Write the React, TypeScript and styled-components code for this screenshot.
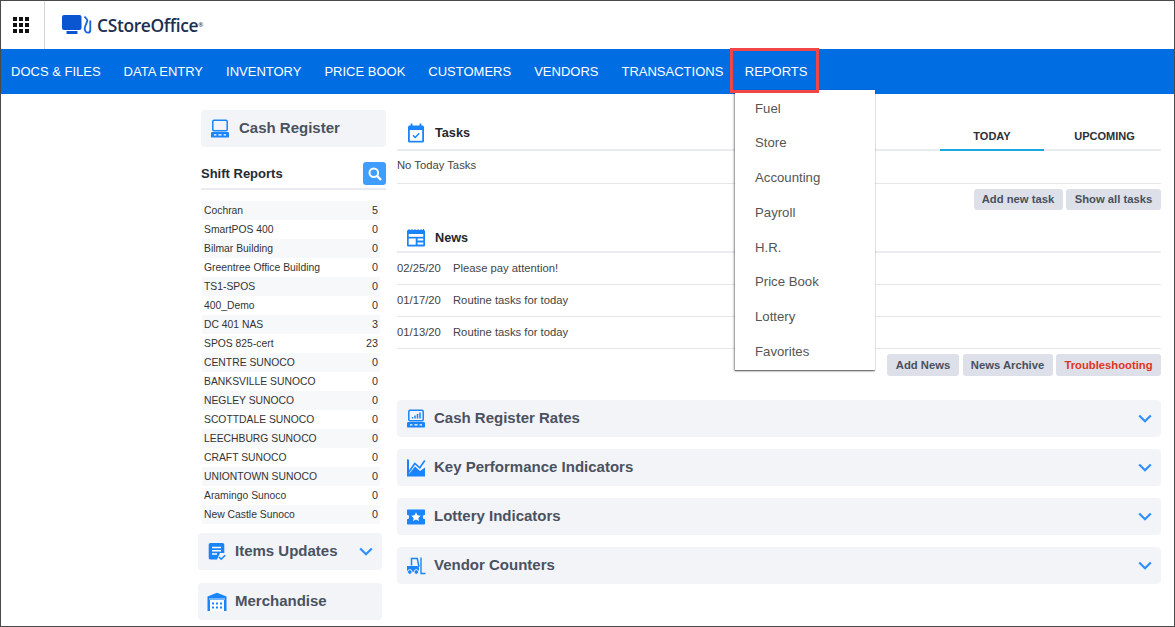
import React from "react";
import styled, { createGlobalStyle } from "styled-components";

const Global = createGlobalStyle`
  html, body { margin: 0; padding: 0; background: #fff; }
  * { box-sizing: border-box; }
`;

const sans = `"Liberation Sans", Arial, sans-serif`;
const ICON = "#1a84fb";

const Frame = styled.div`
  position: relative;
  width: 1175px;
  height: 627px;
  overflow: hidden;
  border: 1px solid #4a4a4a;
  background: #fff;
  font-family: ${sans};
`;

const TopBar = styled.header`
  display: flex;
  align-items: center;
  height: 48px;
  background: #fff;
`;

const GridButton = styled.div`
  display: grid;
  grid-template-columns: repeat(3, 4px);
  grid-auto-rows: 4px;
  gap: 2px;
  align-content: center;
  justify-content: start;
  width: 44px;
  height: 48px;
  padding-left: 12px;
  border-right: 1px solid #d6d6d6;
`;

const GridDot = styled.span`
  background: #111;
`;

const LogoWrap = styled.div`
  display: flex;
  align-items: center;
  margin-left: 17px;
`;

const LogoText = styled.span`
  margin-left: 5px;
  margin-top: -1px;
  font-family: "Open Sans", sans-serif;
  font-size: 17.4px;
  font-weight: 600;
  letter-spacing: -0.35px;
  color: #1c3050;
  sup {
    font-size: 6px;
    vertical-align: 5px;
    line-height: 0;
    letter-spacing: 0;
  }
`;

const Nav = styled.nav`
  display: flex;
  align-items: center;
  height: 45px;
  padding-left: 10px;
  padding-bottom: 1px;
  background: #006de3;
`;

const NavItem = styled.a`
  margin-right: 23px;
  font-size: 13px;
  color: #fff;
  white-space: nowrap;
  &:nth-last-child(2) {
    margin-right: 21.5px;
  }
`;

const Highlight = styled.div`
  position: absolute;
  left: 729px;
  top: 47px;
  width: 89px;
  height: 45px;
  border: 3px solid #f24545;
  z-index: 3;
`;

const Menu = styled.ul`
  position: absolute;
  left: 734px;
  top: 89px;
  width: 140px;
  height: 280px;
  margin: 0;
  padding: 0.8px 0 0;
  list-style: none;
  background: #fff;
  box-shadow: -1px 1px 2px rgba(0, 0, 0, 0.4), 0 1px 1px rgba(0, 0, 0, 0.35), 0 0 1px rgba(0, 0, 0, 0.2);
  z-index: 2;
`;

const MenuItem = styled.li`
  display: flex;
  align-items: center;
  height: 34.72px;
  padding-left: 20px;
  font-size: 13.2px;
  color: #555;
`;

const Main = styled.main`
  display: flex;
  align-items: flex-start;
`;

const Sidebar = styled.aside`
  width: 185px;
  margin-left: 200px;
  padding-top: 16px;
`;

const PanelHead = styled.div<{ $shift?: boolean }>`
  display: flex;
  align-items: center;
  width: ${(p) => (p.$shift ? "184px" : "185px")};
  height: 37px;
  margin-left: ${(p) => (p.$shift ? "-3px" : "0")};
  padding-left: 9px;
  padding-right: 9px;
  border-radius: 4px;
  background: #f3f4f8;
`;

const PanelIcon = styled.span<{ $gap?: number }>`
  display: flex;
  width: 20px;
  height: 20px;
  flex: none;
  margin-right: ${(p) => p.$gap ?? 8}px;
`;

const PanelTitle = styled.span`
  flex: 1;
  padding-bottom: 1.5px;
  font-size: 15px;
  font-weight: 700;
  color: #4a5260;
  white-space: nowrap;
`;

const ShiftHead = styled.div`
  display: flex;
  align-items: center;
  justify-content: space-between;
  height: 43px;
  padding-top: 12px;
  margin-bottom: 11px;
  border-bottom: 2px solid #e9ebf0;
`;

const ShiftTitle = styled.span`
  font-size: 13px;
  font-weight: 700;
  color: #262b33;
`;

const SearchButton = styled.span`
  display: flex;
  align-items: center;
  justify-content: center;
  width: 23px;
  height: 23px;
  border-radius: 3px;
  background: #3f9dff;
`;

const RowList = styled.div`
  width: 178px;
  margin-left: 1px;
  margin-bottom: 9px;
`;

const Row = styled.div`
  display: flex;
  align-items: baseline;
  justify-content: space-between;
  height: 19px;
  padding: 0 2px;
  font-size: 10.35px;
  line-height: 19px;
  color: #333;
  &:nth-child(odd) {
    background: #f7f8fa;
  }
`;

const RowValue = styled.span`
  font-size: 10.8px;
`;

const Spacer = styled.div`
  height: 13px;
`;

const Content = styled.section`
  width: 764px;
  margin-left: 11px;
  padding-top: 22px;
`;

const SectionHead = styled.div<{ $top?: number }>`
  position: relative;
  display: flex;
  align-items: center;
  height: ${(p) => (p.$top ? "29px" : "35px")};
  margin-top: ${(p) => p.$top ?? 0}px;
  padding-top: ${(p) => (p.$top ? "0" : "1px")};
  padding-left: 9px;
  border-bottom: 2px solid #e9ebf0;
`;

const SectionIcon = styled.span`
  display: flex;
  flex: none;
  width: 20px;
  height: 20px;
  margin-right: 9px;
`;

const SectionTitle = styled.span`
  font-size: 12.7px;
  font-weight: 700;
  color: #23272e;
`;

const Tabs = styled.div`
  position: absolute;
  right: 0;
  bottom: -2px;
  display: flex;
  height: 33px;
`;

const Tab = styled.div<{ $active?: boolean; $w: number }>`
  display: flex;
  align-items: center;
  justify-content: center;
  width: ${(p) => p.$w}px;
  padding-top: 4px;
  font-size: 11px;
  font-weight: 700;
  color: #2b2f36;
  border-bottom: 2px solid ${(p) => (p.$active ? "#1ba7e0" : "#e9ebf0")};
  &:last-child {
    padding-left: 4px;
  }
`;

const BodyRow = styled.div`
  display: flex;
  align-items: center;
  height: 32px;
  padding-bottom: 1.5px;
  font-size: 11.25px;
  color: #444;
  border-bottom: 1px solid #e4e6ea;
`;

const TaskBody = styled(BodyRow)`
  height: 33px;
  padding-bottom: 4.5px;
`;

const NewsDate = styled.span`
  width: 56px;
`;

const Actions = styled.div<{ $top?: number }>`
  display: flex;
  justify-content: flex-end;
  gap: 3.5px;
  margin-top: ${(p) => p.$top ?? 5}px;
`;

const ActionButton = styled.span<{ $danger?: boolean; $w: number }>`
  display: flex;
  align-items: center;
  justify-content: center;
  width: ${(p) => p.$w}px;
  height: 21.5px;
  border-radius: 3px;
  background: #dde0e8;
  font-size: 11.25px;
  font-weight: 700;
  color: ${(p) => (p.$danger ? "#e1341e" : "#48505e")};
  white-space: nowrap;
`;

const Accordions = styled.div`
  display: flex;
  flex-direction: column;
  gap: 12px;
  margin-top: 24.5px;
`;

const Accordion = styled.div`
  display: flex;
  align-items: center;
  height: 37px;
  padding: 0 9px;
  border-radius: 4px;
  background: #f3f4f8;
`;

const Chevron = () => (
  <svg width="14" height="9" viewBox="0 0 14 9" fill="none" stroke="#2f8fff" strokeWidth="2.2">
    <path d="M1.2 1.5 7 7.2l5.800-5.700" />
  </svg>
);

const RegisterIcon = () => (
  <svg width="20" height="20" viewBox="0 0 20 20" fill="none">
    <rect x="2.800" y="1.200" width="14.400" height="10.600" rx="1.200" stroke={ICON} strokeWidth="1.500" />
    <rect x="1" y="13" width="18" height="5.600" rx="1.200" fill={ICON} />
    <path d="M4 15.800h2.400M8.400 15.800h3.200M13.600 15.800H16" stroke="#fff" strokeWidth="1.300" />
  </svg>
);

const RatesIcon = () => (
  <svg width="20" height="20" viewBox="0 0 20 20" fill="none">
    <rect x="2.800" y="1.200" width="14.400" height="10.600" rx="1.200" stroke={ICON} strokeWidth="1.500" />
    <path d="M6.500 9.500V8M9 9.500V6.500M11.500 9.500V5M14 9.500V3.500" stroke={ICON} strokeWidth="1.500" />
    <rect x="1" y="13" width="18" height="5.600" rx="1.200" fill={ICON} />
    <path d="M4 15.800h2.400M8.400 15.800h3.200M13.600 15.800H16" stroke="#fff" strokeWidth="1.300" />
  </svg>
);

const TrendIcon = () => (
  <svg width="20" height="20" viewBox="0 0 20 20" fill="none">
    <path d="M1 1.500V18.500h18V9.500L14 13 9 8.500 3 16V2z" fill={ICON} />
    <path d="M1.800 1.500v16.500" stroke={ICON} strokeWidth="1.600" />
    <path d="M2.500 14.500 8.800 5.500l5 4.300L18.800 2.500" stroke={ICON} strokeWidth="1.600" />
  </svg>
);

const TicketIcon = () => (
  <svg width="20" height="20" viewBox="0 0 20 20">
    <path
      d="M2 2.500h16c.6 0 1 .4 1 1V7.800a2.200 2.200 0 0 0 0 4.400v4.300c0 .6-.4 1-1 1H2c-.6 0-1-.4-1-1v-4.300a2.200 2.200 0 0 0 0-4.400V3.500c0-.6.4-1 1-1z"
      fill={ICON}
    />
    <path d="m10 5.300 1.400 3 3.300.4-2.400 2.200.6 3.200-2.900-1.600-2.900 1.600.6-3.200-2.400-2.200 3.300-.4z" fill="#fff" />
  </svg>
);

const ForkliftIcon = () => (
  <svg width="20" height="20" viewBox="0 0 20 20" fill="none">
    <path d="M5.500 9.500V2.500h5.800l1.700 8.500" stroke={ICON} strokeWidth="1.500" />
    <path d="M1 10h10.500l1.500 1.500V16H1z" fill={ICON} />
    <circle cx="3.800" cy="16" r="2.300" fill={ICON} stroke="#f3f4f8" strokeWidth="1" />
    <circle cx="10.300" cy="16" r="2.300" fill={ICON} stroke="#f3f4f8" strokeWidth="1" />
    <path d="M15 1.500V17.500h4.500" stroke={ICON} strokeWidth="1.400" />
  </svg>
);

const CalendarIcon = () => (
  <svg width="20" height="20" viewBox="0 0 20 20" fill="none">
    <rect x="2" y="2.500" width="16" height="17" rx="1.500" fill={ICON} />
    <path d="M5.500 0.500v3M14.500 0.500v3" stroke={ICON} strokeWidth="1.800" />
    <rect x="3.800" y="7" width="12.400" height="10.800" fill="#fff" />
    <path d="m7 12.300 2.200 2.200 4-4.200" stroke={ICON} strokeWidth="1.500" />
  </svg>
);

const NewsIcon = () => (
  <svg width="20" height="20" viewBox="0 0 20 20">
    <rect x="1" y="2" width="18" height="16.500" rx="1.200" fill={ICON} />
    <path d="M2.500 1h1v2h-1zM5.500 1h1v2h-1zM8.500 1h1v2h-1zM11.500 1h1v2h-1zM14.500 1h1v2h-1zM17 1h1v2h-1z" fill={ICON} />
    <rect x="2.700" y="6" width="14.600" height="2.800" fill="#fff" />
    <rect x="2.700" y="10.500" width="7" height="6.200" fill="#fff" />
    <rect x="11.500" y="10.500" width="5.800" height="2" fill="#fff" />
    <rect x="11.500" y="14.500" width="5.800" height="2" fill="#fff" />
  </svg>
);

const UpdatesIcon = () => (
  <svg width="20" height="20" viewBox="0 0 20 20" fill="none">
    <path d="M3.500 1h12c1 0 1.800.8 1.800 1.800V11h-4.300l-3 6.500H3.500c-1 0-1.800-.8-1.800-1.800V2.800c0-1 .8-1.800 1.800-1.800z" fill={ICON} />
    <path d="M5 5.500h9M5 8.700h9M5 11.900h5" stroke="#fff" strokeWidth="1.500" />
    <path d="m12 15 2.200 2.200 4-4" stroke={ICON} strokeWidth="1.600" />
  </svg>
);

const WarehouseIcon = () => (
  <svg width="20" height="20" viewBox="0 0 20 20" fill="none">
    <path d="M10 .8 19.500 4.500V19H.5V4.500z" fill={ICON} />
    <rect x="3" y="8" width="14" height="11" fill="#fff" />
    <path d="M2 7h16" stroke="#fff" strokeWidth=".8" />
    <path d="M5 10.500h2v2H5zM9 10.500h2v2H9zM13 10.500h2v2h-2zM5 14.500h2v2H5zM9 14.500h2v2H9zM13 14.500h2v2h-2z" fill={ICON} />
  </svg>
);

const SearchIcon = () => (
  <svg width="14" height="14" viewBox="0 0 14 14" fill="none" stroke="#fff" strokeWidth="2">
    <circle cx="5.800" cy="5.800" r="4.300" />
    <path d="m9 9 4 4" strokeWidth="2.400" />
  </svg>
);

const LogoMark = () => (
  <svg width="30" height="20" viewBox="0 0 30 20" fill="none">
    <rect x="0" y="0" width="19.500" height="15" rx="2" fill="#0a55d0" />
    <rect x="4.500" y="16" width="11" height="3" rx="0.600" fill="#0a55d0" />
    <path d="M22.500 1.500 25 4.500c.5.600.5 1 .2 1.700l-2.300 6c-.6 1.800.2 5.500 3.100 5.500 1.800 0 2.300-1.500 2.300-3V5.500" stroke="#1464d8" strokeWidth="1.800" />
  </svg>
);

const navItems = ["DOCS & FILES", "DATA ENTRY", "INVENTORY", "PRICE BOOK", "CUSTOMERS", "VENDORS", "TRANSACTIONS", "REPORTS"];
const menuItems = ["Fuel", "Store", "Accounting", "Payroll", "H.R.", "Price Book", "Lottery", "Favorites"];
const rows: [string, number][] = [
  ["Cochran", 5],
  ["SmartPOS 400", 0],
  ["Bilmar Building", 0],
  ["Greentree Office Building", 0],
  ["TS1-SPOS", 0],
  ["400_Demo", 0],
  ["DC 401 NAS", 3],
  ["SPOS 825-cert", 23],
  ["CENTRE SUNOCO", 0],
  ["BANKSVILLE SUNOCO", 0],
  ["NEGLEY SUNOCO", 0],
  ["SCOTTDALE SUNOCO", 0],
  ["LEECHBURG SUNOCO", 0],
  ["CRAFT SUNOCO", 0],
  ["UNIONTOWN SUNOCO", 0],
  ["Aramingo Sunoco", 0],
  ["New Castle Sunoco", 0],
];
const news = [
  ["02/25/20", "Please pay attention!"],
  ["01/17/20", "Routine tasks for today"],
  ["01/13/20", "Routine tasks for today"],
];
const accordions: [React.ReactNode, string][] = [
  [<RatesIcon key="r" />, "Cash Register Rates"],
  [<TrendIcon key="t" />, "Key Performance Indicators"],
  [<TicketIcon key="l" />, "Lottery Indicators"],
  [<ForkliftIcon key="v" />, "Vendor Counters"],
];

export default function App() {
  return (
    <>
      <Global />
      <Frame>
        <TopBar>
          <GridButton>
            {Array.from({ length: 9 }).map((_, i) => (
              <GridDot key={i} />
            ))}
          </GridButton>
          <LogoWrap>
            <LogoMark />
            <LogoText>
              CStoreOffice<sup>®</sup>
            </LogoText>
          </LogoWrap>
        </TopBar>
        <Nav>
          {navItems.map((n) => (
            <NavItem key={n}>{n}</NavItem>
          ))}
        </Nav>
        <Highlight />
        <Menu>
          {menuItems.map((m) => (
            <MenuItem key={m}>{m}</MenuItem>
          ))}
        </Menu>
        <Main>
          <Sidebar>
            <PanelHead>
              <PanelIcon $gap={9}>
                <RegisterIcon />
              </PanelIcon>
              <PanelTitle>Cash Register</PanelTitle>
            </PanelHead>
            <ShiftHead>
              <ShiftTitle>Shift Reports</ShiftTitle>
              <SearchButton>
                <SearchIcon />
              </SearchButton>
            </ShiftHead>
            <RowList>
              {rows.map(([name, value]) => (
                <Row key={name}>
                  <span>{name}</span>
                  <RowValue>{value}</RowValue>
                </Row>
              ))}
            </RowList>
            <PanelHead $shift>
              <PanelIcon>
                <UpdatesIcon />
              </PanelIcon>
              <PanelTitle>Items Updates</PanelTitle>
              <Chevron />
            </PanelHead>
            <Spacer />
            <PanelHead $shift>
              <PanelIcon>
                <WarehouseIcon />
              </PanelIcon>
              <PanelTitle>Merchandise</PanelTitle>
            </PanelHead>
          </Sidebar>
          <Content>
            <SectionHead>
              <SectionIcon>
                <CalendarIcon />
              </SectionIcon>
              <SectionTitle>Tasks</SectionTitle>
              <Tabs>
                <Tab $active $w={104}>TODAY</Tab>
                <Tab $w={117}>UPCOMING</Tab>
              </Tabs>
            </SectionHead>
            <TaskBody>No Today Tasks</TaskBody>
            <Actions $top={4.5}>
              <ActionButton $w={89}>Add new task</ActionButton>
              <ActionButton $w={95}>Show all tasks</ActionButton>
            </Actions>
            <SectionHead $top={14}>
              <SectionIcon>
                <NewsIcon />
              </SectionIcon>
              <SectionTitle>News</SectionTitle>
            </SectionHead>
            {news.map(([d, t]) => (
              <BodyRow key={d}>
                <NewsDate>{d}</NewsDate>
                <span>{t}</span>
              </BodyRow>
            ))}
            <Actions>
              <ActionButton $w={72}>Add News</ActionButton>
              <ActionButton $w={90}>News Archive</ActionButton>
              <ActionButton $danger $w={105}>Troubleshooting</ActionButton>
            </Actions>
            <Accordions>
              {accordions.map(([icon, title]) => (
                <Accordion key={title}>
                  <PanelIcon>{icon}</PanelIcon>
                  <PanelTitle>{title}</PanelTitle>
                  <Chevron />
                </Accordion>
              ))}
            </Accordions>
          </Content>
        </Main>
      </Frame>
    </>
  );
}
